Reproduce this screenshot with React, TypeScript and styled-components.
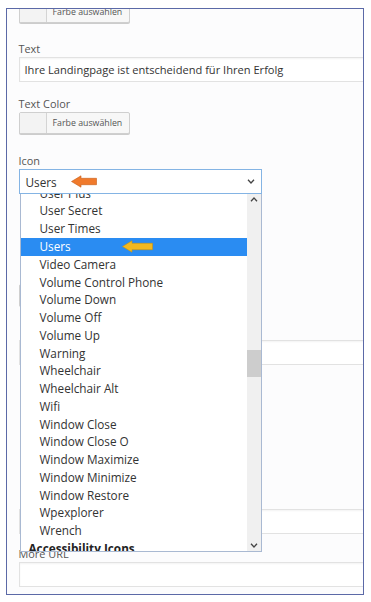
import React from "react";
import styled, { createGlobalStyle } from "styled-components";

const Global = createGlobalStyle`
  html, body { margin: 0; padding: 0; background: #ffffff; }
  body { font-family: "Open Sans", "Noto Sans", "Liberation Sans", sans-serif; }
`;

const Frame = styled.div`
  margin: 8px 0 0 6px;
  width: 358px;
  height: 587px;
  box-sizing: border-box;
  border: 1.5px solid #5b69a7;
  background: #fcfcfd;
  overflow: hidden;
`;

const Content = styled.div`
  width: 400px;
  padding-left: 11.5px;
  margin-top: -8px;
  display: flex;
  flex-direction: column;
`;

const Label = styled.div<{ $top?: number }>`
  margin-top: ${(p) => p.$top ?? 0}px;
  font-size: 10.9px;
  line-height: 16px;
  color: #555;
`;

const Input = styled.div<{ $top?: number }>`
  margin-top: ${(p) => p.$top ?? 0}px;
  height: 25px;
  box-sizing: border-box;
  border: 1px solid #e2e2e2;
  box-shadow: inset 0 1px 2px rgba(0, 0, 0, 0.05);
  background: #fff;
  padding-left: 5px;
  display: flex;
  align-items: center;
  font-size: 11.1px;
  color: #333;
`;

const ColorButton = styled.div<{ $top?: number }>`
  margin-top: ${(p) => p.$top ?? 0}px;
  width: 111px;
  height: 22px;
  box-sizing: border-box;
  border: 1px solid #cfcfcf;
  border-radius: 2px;
  background: #f7f7f7;
  box-shadow: 0 1px 0 #cccccc;
  display: flex;
`;

const Swatch = styled.div`
  flex: 0 0 26px;
  border-right: 1px solid #d4d4d4;
  background: #f3f3f3;
`;

const ButtonText = styled.div`
  flex: 1;
  padding-left: 6px;
  display: flex;
  align-items: center;
  font-size: 8.8px;
  color: #555;
  white-space: nowrap;
`;

const SelectField = styled.div`
  position: relative;
  width: 243px;
`;

const Select = styled.div`
  height: 25px;
  box-sizing: border-box;
  border: 1px solid #84b4e4;
  background: #fff;
  padding: 0 6px;
  display: flex;
  align-items: center;
  justify-content: space-between;
  font-size: 11.75px;
  color: #333;
`;

const SelectValue = styled.div`
  display: flex;
  align-items: center;
  gap: 14px;
`;

const Dropdown = styled.div`
  position: absolute;
  top: 25px;
  left: 1px;
  width: 242px;
  height: 358px;
  box-sizing: border-box;
  border: 1px solid #a9b9d2;
  border-top: none;
  background: #fff;
  overflow: hidden;
  z-index: 5;
`;

const List = styled.div`
  width: 226px;
  margin-top: -9.3px;
  display: flex;
  flex-direction: column;
`;

const Item = styled.div<{ $selected?: boolean }>`
  height: 17.78px;
  line-height: 17.78px;
  padding-left: 19px;
  font-size: 11.75px;
  white-space: nowrap;
  color: ${(p) => (p.$selected ? "#ffffff" : "#333333")};
  background: ${(p) => (p.$selected ? "#2a8cf2" : "transparent")};
  display: flex;
  align-items: center;
  gap: 51px;
`;

const Group = styled.div`
  height: 17.78px;
  line-height: 17.78px;
  padding-left: 8px;
  font-size: 11.75px;
  font-weight: 700;
  color: #222;
`;

const Scrollbar = styled.div`
  position: absolute;
  top: 0;
  right: 0;
  bottom: 0;
  width: 14px;
  background: #f0f0f0;
`;

const ScrollArrow = styled.div<{ $pos: "top" | "bottom" }>`
  position: absolute;
  left: 0;
  right: 0;
  ${(p) => (p.$pos === "top" ? "top: 3px;" : "bottom: 3px;")}
  display: flex;
  justify-content: center;
`;

const Thumb = styled.div`
  position: absolute;
  left: 0;
  right: 0;
  top: 156px;
  height: 27px;
  background: #cdcdcd;
`;

const Arrow = ({ color, dark, w }: { color: string; dark: string; w: number }) => (
  <svg width={w} height="13" viewBox={`0 0 ${w} 13`}>
    <path
      d={`M0.5 6.5 L10 0.8 L10 3.3 L${w - 0.5} 3.3 L${w - 0.5} 9.7 L10 9.7 L10 12.2 Z`}
      fill={color}
      stroke={dark}
      strokeWidth="0.6"
    />
  </svg>
);

const Chevron = ({ up }: { up?: boolean }) => (
  <svg width="8" height="5" viewBox="0 0 8 5">
    <path
      d={up ? "M1 4.2 L4 1 L7 4.2" : "M1 0.8 L4 4 L7 0.8"}
      fill="none"
      stroke="#444"
      strokeWidth="1.3"
    />
  </svg>
);

const items = [
  "User Plus",
  "User Secret",
  "User Times",
  "Users",
  "Video Camera",
  "Volume Control Phone",
  "Volume Down",
  "Volume Off",
  "Volume Up",
  "Warning",
  "Wheelchair",
  "Wheelchair Alt",
  "Wifi",
  "Window Close",
  "Window Close O",
  "Window Maximize",
  "Window Minimize",
  "Window Restore",
  "Wpexplorer",
  "Wrench",
];

export default function App() {
  return (
    <>
      <Global />
      <Frame>
        <Content>
          <ColorButton>
            <Swatch />
            <ButtonText>Farbe auswählen</ButtonText>
          </ColorButton>
          <Label $top={18}>Text</Label>
          <Input>Ihre Landingpage ist entscheidend für Ihren Erfolg</Input>
          <Label $top={14}>Text Color</Label>
          <ColorButton>
            <Swatch />
            <ButtonText>Farbe auswählen</ButtonText>
          </ColorButton>
          <Label $top={19}>Icon</Label>
          <SelectField>
            <Select>
              <SelectValue>
                Users
                <Arrow color="#f07a2c" dark="#c85e18" w={26} />
              </SelectValue>
              <Chevron />
            </Select>
            <Dropdown>
              <List>
                {items.map((it) => (
                  <Item key={it} $selected={it === "Users"}>
                    {it}
                    {it === "Users" && <Arrow color="#f2b81f" dark="#c9930e" w={31} />}
                  </Item>
                ))}
                <Group>Accessibility Icons</Group>
              </List>
              <Scrollbar>
                <ScrollArrow $pos="top">
                  <Chevron up />
                </ScrollArrow>
                <Thumb />
                <ScrollArrow $pos="bottom">
                  <Chevron />
                </ScrollArrow>
              </Scrollbar>
            </Dropdown>
          </SelectField>
          <ColorButton $top={90} />
          <Input $top={34} />
          <Input $top={144} />
          <Label $top={12}>More URL</Label>
          <Input />
        </Content>
      </Frame>
    </>
  );
}
